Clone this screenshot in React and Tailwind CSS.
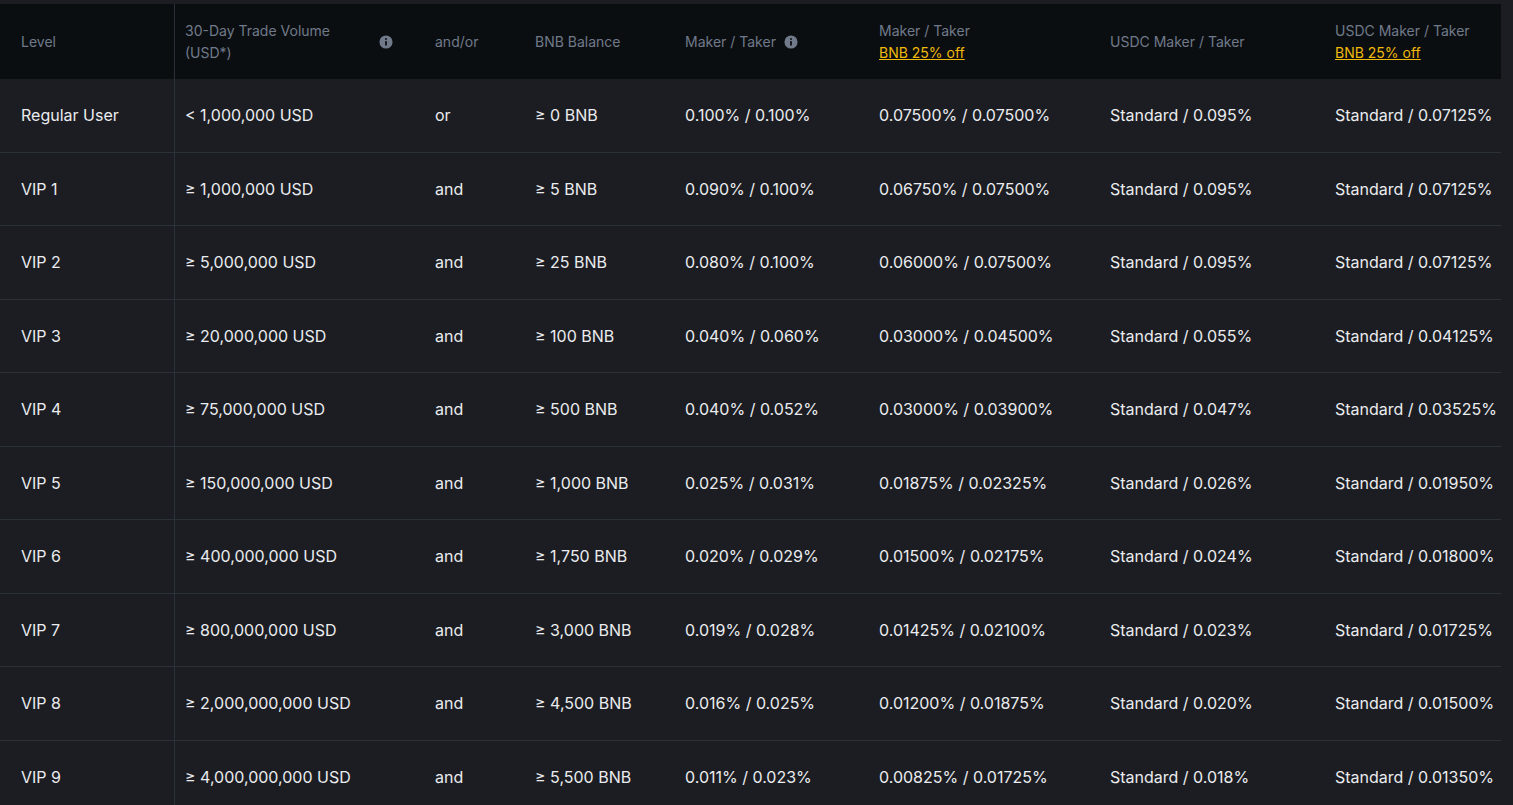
const rows = [
["Regular User","< 1,000,000 USD","or","≥ 0 BNB","0.100% / 0.100%","0.07500% / 0.07500%","Standard / 0.095%","Standard / 0.07125%"],
["VIP 1","≥ 1,000,000 USD","and","≥ 5 BNB","0.090% / 0.100%","0.06750% / 0.07500%","Standard / 0.095%","Standard / 0.07125%"],
["VIP 2","≥ 5,000,000 USD","and","≥ 25 BNB","0.080% / 0.100%","0.06000% / 0.07500%","Standard / 0.095%","Standard / 0.07125%"],
["VIP 3","≥ 20,000,000 USD","and","≥ 100 BNB","0.040% / 0.060%","0.03000% / 0.04500%","Standard / 0.055%","Standard / 0.04125%"],
["VIP 4","≥ 75,000,000 USD","and","≥ 500 BNB","0.040% / 0.052%","0.03000% / 0.03900%","Standard / 0.047%","Standard / 0.03525%"],
["VIP 5","≥ 150,000,000 USD","and","≥ 1,000 BNB","0.025% / 0.031%","0.01875% / 0.02325%","Standard / 0.026%","Standard / 0.01950%"],
["VIP 6","≥ 400,000,000 USD","and","≥ 1,750 BNB","0.020% / 0.029%","0.01500% / 0.02175%","Standard / 0.024%","Standard / 0.01800%"],
["VIP 7","≥ 800,000,000 USD","and","≥ 3,000 BNB","0.019% / 0.028%","0.01425% / 0.02100%","Standard / 0.023%","Standard / 0.01725%"],
["VIP 8","≥ 2,000,000,000 USD","and","≥ 4,500 BNB","0.016% / 0.025%","0.01200% / 0.01875%","Standard / 0.020%","Standard / 0.01500%"],
["VIP 9","≥ 4,000,000,000 USD","and","≥ 5,500 BNB","0.011% / 0.023%","0.00825% / 0.01725%","Standard / 0.018%","Standard / 0.01350%"],
];
const widths = ["w-[175px] pl-[21px] border-r border-[#2b3139]","w-[260px] pl-[10px]","w-[100px]","w-[150px]","w-[194px]","w-[231px]","w-[225px]","w-[166px]"];
const Info = () => (
  <svg width="14" height="14" viewBox="0 0 16 16" className="shrink-0"><circle cx="8" cy="8" r="7.5" fill="#707a8a"/><rect x="7" y="7" width="2" height="5" fill="#0b0e11"/><circle cx="8" cy="4.6" r="1.1" fill="#0b0e11"/></svg>
);
const Off = () => <div className="text-[#f0b90b] underline">BNB 25% off</div>;
export default function App() {
  return (
    <div className="w-[1513px] h-[805px] overflow-hidden bg-[#1c1d22] pt-[4px]" style={{fontFamily:'Inter, sans-serif'}}>
      <div className="w-[1501px]">
        <div className="flex h-[75px] bg-[#0b0e11] text-[14px] text-[#707a8a] leading-[22px] items-center">
          <div className={widths[0]+" h-full flex items-center"}>Level</div>
          <div className={widths[1]+" flex items-center justify-between pr-[42px]"}><div>30-Day Trade Volume<br/>(USD*)</div><Info/></div>
          <div className={widths[2]}>and/or</div>
          <div className={widths[3]}>BNB Balance</div>
          <div className={widths[4]+" flex items-center gap-2"}>Maker / Taker <Info/></div>
          <div className={widths[5]}><div>Maker / Taker</div><Off/></div>
          <div className={widths[6]}>USDC Maker / Taker</div>
          <div className={widths[7]}><div>USDC Maker / Taker</div><Off/></div>
        </div>
        {rows.map((r,i)=>(
          <div key={i} className="flex h-[73.5px] border-b border-[#2b3139] text-[16px] text-[#eaecef] items-center">
            {r.map((c,j)=>(<div key={j} className={widths[j]+(j===0?" h-full flex items-center":"")+" whitespace-nowrap"}>{c}</div>))}
          </div>
        ))}
      </div>
    </div>
  );
}
